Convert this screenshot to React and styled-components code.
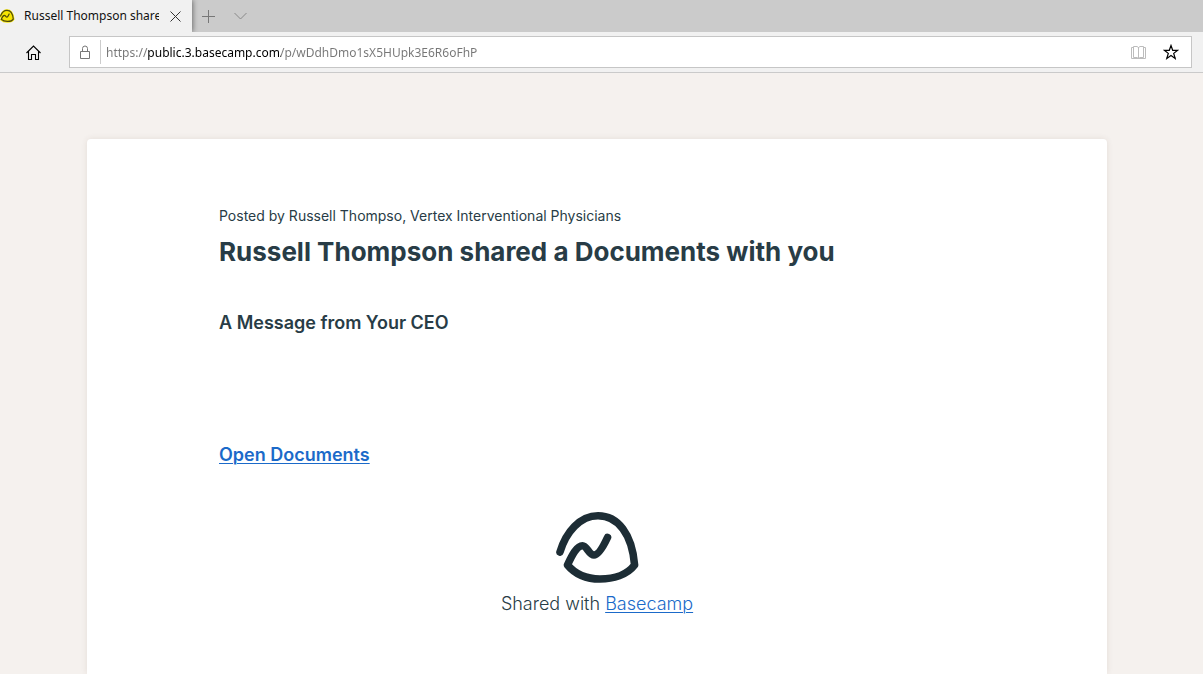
import React from 'react';
import styled, { createGlobalStyle } from 'styled-components';

const GlobalStyle = createGlobalStyle`
  * {
    box-sizing: border-box;
  }

  body {
    margin: 0;
    background-color: #f5f1ee;
  }
`;

const Window = styled.div`
  display: flex;
  flex-direction: column;
  min-height: 100vh;
`;

const TabStrip = styled.div`
  display: flex;
  height: 32px;
  background-color: #cbcbcb;
  font-family: 'Noto Sans', 'Open Sans', sans-serif;
`;

const Tab = styled.div`
  display: flex;
  align-items: center;
  width: 192px;
  padding-right: 9px;
  background-color: #f1f1f1;
  box-shadow: 1px 0 5px rgba(0, 0, 0, 0.45);
  clip-path: inset(0 -8px 0 0);
`;

const TabTitle = styled.span`
  flex: 1;
  margin-left: 9px;
  margin-right: 8px;
  overflow: hidden;
  white-space: nowrap;
  font-size: 12px;
  line-height: 18px;
  color: #111;
`;

const IconButton = styled.button`
  display: flex;
  align-items: center;
  justify-content: center;
  width: ${(props) => props.$width || 16}px;
  height: 32px;
  padding: 0;
  border: 0;
  background: none;
  color: ${(props) => props.$color || '#000'};
`;

const Toolbar = styled.div`
  display: flex;
  align-items: center;
  height: 41px;
  padding: 0 11px 0 24px;
  border-bottom: 1px solid #cacaca;
  background-color: #f1f1f1;
`;

const AddressBar = styled.div`
  flex: 1;
  display: flex;
  align-items: center;
  height: 32px;
  margin-left: 27px;
  padding: 0 4px 0 7px;
  border: 1px solid #c6c6c6;
  background-color: #fff;
`;

const Divider = styled.span`
  width: 1px;
  height: 24px;
  margin: 0 5px 0 7px;
  background-color: #ccc;
`;

// host name is darker than the scheme and the path
const AddressInput = styled.input`
  flex: 1;
  min-width: 0;
  height: 24px;
  padding: 0;
  border: 0;
  outline: 0;
  font-family: 'Noto Sans', 'Open Sans', sans-serif;
  font-size: 12px;
  color: transparent;
  caret-color: #000;
  background-image: linear-gradient(to right, #767676 42px, #000 42px, #000 175px, #767676 175px);
  background-clip: text;
`;

const Page = styled.main`
  flex: 1;
  display: flex;
  justify-content: center;
  padding: 66px 9px 0 0;
  font-family: Inter, 'Liberation Sans', sans-serif;
  color: #283c46;
`;

const Card = styled.article`
  width: 100%;
  max-width: 1020px;
  padding: 66px 132px 56px;
  border-radius: 4px 4px 0 0;
  background-color: #fff;
  box-shadow: 0 0 6px rgba(80, 50, 30, 0.1);
`;

const Byline = styled.p`
  margin: 0;
  font-size: 14px;
  line-height: 22px;
`;

const Title = styled.h1`
  margin: 8px 0 0;
  font-size: 26px;
  font-weight: 700;
  line-height: 34px;
`;

const Message = styled.h2`
  margin: 41px 0 0;
  font-size: 18px;
  font-weight: 600;
  line-height: 26px;
`;

const Link = styled.a`
  color: #1b6ac9;
  text-decoration: underline;
  text-decoration-thickness: 1px;
  text-underline-offset: 2px;
`;

const OpenDocuments = styled.p`
  margin: 106px 0 0;
  font-size: 18px;
  font-weight: 600;
  line-height: 26px;
`;

const Footer = styled.footer`
  display: flex;
  flex-direction: column;
  align-items: center;
  margin-top: 44px;
  font-size: 18px;
  font-weight: 300;
  line-height: 26px;

  p {
    margin: 7px 0 0;
  }
`;

const Favicon = () => (
  <svg width="15" height="14" viewBox="0 0 15 14" fill="none" strokeLinecap="round" strokeLinejoin="round">
    <path
      d="M0.5 7.5C2 3 4.5 1.2 7 1.2c4 0 6 4.3 6.5 9-1.8 3-9.2 3.6-12.4.3"
      fill="#f7e500"
      stroke="#f7e500"
      strokeWidth="2"
    />
    <path
      d="M0.5 7C2 3.2 4.2 1.4 7 1.4c4 0 5.8 4.1 6.3 8.7-1.7 2.8-8.7 3.4-12 .2C2 8.4 3.4 6.4 4.5 6.4S6 8.3 7 8.1 8.4 6.4 9.1 5"
      stroke="#4e4a0c"
      strokeWidth="1.2"
    />
  </svg>
);

const BasecampLogo = () => (
  <svg
    width="84"
    height="72"
    viewBox="0 0 84 72"
    fill="none"
    stroke="#1d2d35"
    strokeWidth="7.6"
    strokeLinecap="round"
    strokeLinejoin="round"
    role="img"
    aria-label="Basecamp"
  >
    <path d="M5 40C11 20 25 3.800 43 3.800C63 3.800 77 22 79.600 53C72 63 58 67 45 67C31 67 20 62 12.500 53C17 43 22 33.700 27.500 33.700C32 33.700 34 43 39 43C43.500 43 49 33 52.500 25.500" />
  </svg>
);

const App = () => {
  return (
    <>
      <GlobalStyle />
      <Window>
        <TabStrip>
          <Tab>
            <Favicon />
            <TabTitle>Russell Thompson shared</TabTitle>
            <IconButton aria-label="Close tab" $color="#333">
              <svg width="11" height="11" viewBox="0 0 11 11" stroke="currentColor">
                <path d="M0.5 0.5l10 10M10.5 0.5l-10 10" />
              </svg>
            </IconButton>
          </Tab>
          <IconButton aria-label="New tab" $width={32} $color="#777">
            <svg width="13" height="13" viewBox="0 0 13 13" stroke="currentColor">
              <path d="M6.5 0v13M0 6.5h13" />
            </svg>
          </IconButton>
          <IconButton aria-label="Tab options" $width={32} $color="#888">
            <svg width="13" height="8" viewBox="0 0 13 8" fill="none" stroke="currentColor">
              <path d="M0.5 1l6 6 6-6" />
            </svg>
          </IconButton>
        </TabStrip>

        <Toolbar>
          <IconButton aria-label="Home" $width={18}>
            <svg width="15" height="15" viewBox="0 0 15 15" fill="none" stroke="currentColor" strokeWidth="1.1">
              <path d="M0.5 8l7-7 7 7M2.5 6.5v8h3v-5h4v5h3v-8" />
            </svg>
          </IconButton>
          <AddressBar>
            <IconButton aria-label="Site information" $color="#777">
              <svg width="12" height="14" viewBox="0 0 12 14" fill="none" stroke="currentColor">
                <path d="M1.5 6.5h9v7h-9zM3.5 6.5V3.500a2.500 2.500 0 0 1 5 0v3" />
              </svg>
            </IconButton>
            <Divider />
            <AddressInput
              type="text"
              aria-label="Address"
              defaultValue="https://public.3.basecamp.com/p/wDdhDmo1sX5HUpk3E6R6oFhP"
            />
            <IconButton aria-label="Reading view" $width={34} $color="#bcbcbc">
              <svg width="15" height="15" viewBox="0 0 15 15" fill="none" stroke="currentColor">
                <path d="M7.5 2v11.500M2.500 1.500h3.500l1.500 1 1.500-1h3.500v11h-3.500l-1.500 1-1.500-1h-3.500zM2.500 2.500h-2v11h14v-11h-2" />
              </svg>
            </IconButton>
            <IconButton aria-label="Add to favorites" $width={32}>
              <svg width="16" height="16" viewBox="0 0 16 16" fill="none" stroke="currentColor" strokeWidth="1.200">
                <path d="M8 1.500l1.700 4.800h5l-4 3.100 1.500 5L8 11.400l-4.200 3 1.500-5-4-3.100h5z" />
              </svg>
            </IconButton>
          </AddressBar>
        </Toolbar>

        <Page>
          <Card>
            <Byline>Posted by Russell Thompso, Vertex Interventional Physicians</Byline>
            <Title>Russell Thompson shared a Documents with you</Title>
            <Message>A Message from Your CEO</Message>
            <OpenDocuments>
              <Link href="#documents">Open Documents</Link>
            </OpenDocuments>
            <Footer>
              <BasecampLogo />
              <p>
                Shared with <Link href="#basecamp">Basecamp</Link>
              </p>
            </Footer>
          </Card>
        </Page>
      </Window>
    </>
  );
};

export default App;
